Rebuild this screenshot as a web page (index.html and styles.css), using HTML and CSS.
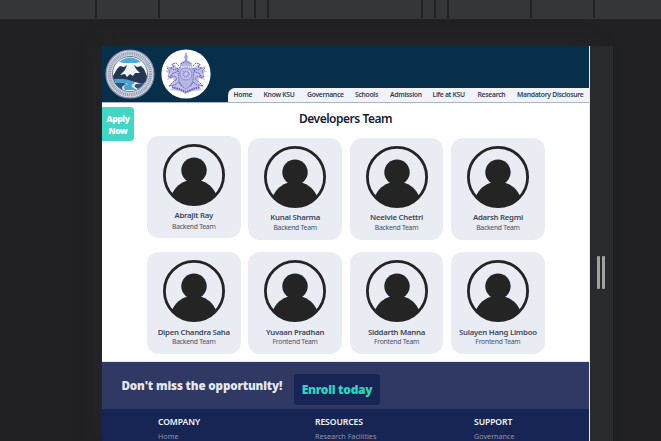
FILE: index.html
```html
<!DOCTYPE html>
<html lang="en">
<head>
<meta charset="utf-8">
<title>Developers Team</title>
<link rel="stylesheet" href="styles.css">
</head>
<body>
<svg class="defs" aria-hidden="true">
  <symbol id="avatar" viewBox="0 0 62 62">
    <circle cx="31" cy="31" r="29.6" fill="none" stroke="#242424" stroke-width="2.8"/>
    <circle cx="31" cy="26.3" r="12.7" fill="#242424"/>
    <path d="M8.5 51C12 43 18 38 25 36.5H37C44 38 50 43 53.5 51A30 30 0 0 1 8.5 51Z" fill="#242424"/>
  </symbol>
</svg>
<div class="ruler"><i></i><i></i><i></i><i></i><i></i><i></i><i></i><i></i><i></i><i></i></div>
<div class="device">
<main class="page">
  <header class="header">
    <div class="logos">
      <svg class="logo" viewBox="0 0 50 50">
        <circle cx="25" cy="25" r="24" fill="#d3d8e4" stroke="#8790aa" stroke-width="1.2"/>
        <circle cx="25" cy="25" r="20.6" fill="none" stroke="#959db2" stroke-width="3.4" stroke-dasharray="1.1 .8"/>
        <circle cx="25" cy="25" r="17.6" fill="#f7fafc" stroke="#68748c" stroke-width=".9"/>
        <path d="M14 13Q25 4 36 13L31 14H19Z" fill="#4cabd9"/>
        <path d="M8 27L12 20L15 17L19 18L22 16L29 16L32 18L36 17L39 20L42 27Q42 32 38 35Q30 33 25 32Q16 32 10 34Q8 30 8 27Z" fill="#243752"/>
        <path d="M22 16H29L31 20L35 24L30 24L28 27L25 25L22 28L20 25L15 26L20 21Z" fill="#edf3ed"/>
        <path d="M9 30Q20 29 27 32Q32 34 28 35Q24 37 32 41L20 41Q16 37 23 35Q20 33 10 34Z" fill="#4ba2d0"/>
        <path d="M10 34Q18 33 22 35Q15 37 18 41Q12 38 10 34M31 35Q27 37 33 40Q38 37 39 34Z" fill="#2d5577"/>
      </svg>
      <svg class="logo" viewBox="0 0 50 50">
        <circle cx="25" cy="25" r="24.6" fill="#fff"/>
        <g fill="#b7b4e4">
          <path d="M25 4L23 8L24 11L19 14V17H31V14L26 11L27 8ZM18 19H32V31Q31 38 25 40Q19 38 18 31Z"/>
          <path d="M17 20L14 16L10 15L12 19L5 17L7 21L4 22L9 25L6 31L12 29L13 33L7 38L13 37L9 41L18 42L25 45L32 42L41 41L37 37L43 38L37 33L38 29L44 31L41 25L46 22L43 21L45 17L38 19L40 15L36 16L33 20Z" opacity=".85"/>
        </g>
        <g fill="none" stroke="#605bb8" stroke-width=".9">
          <path d="M25 4V13M20 15Q25 11 30 15M19 18H31L33 21L32 32Q30 37 25 40Q20 37 18 32L17 21Z" stroke-dasharray="1.4 .8"/>
          <path d="M18 17L15 14L11 15L13 18L9 19L13 21L17 19L16 23L12 24L9 29L14 27L16 30L12 33L8 37L14 36L18 33L21 38M32 17L35 14L39 15L37 18L41 19L37 21L33 19L34 23L38 24L41 29L36 27L34 30L38 33L42 37L36 36L32 33L29 38" stroke-dasharray="2 .7"/>
          <path d="M6 19L9 22L7 28L12 26M44 19L41 22L43 28L38 26" stroke-dasharray="1.5 .7"/>
          <path d="M11 38L18 40L25 43L32 40L39 38" stroke-width="1.8" stroke-dasharray="1.5 .8"/>
        </g>
        <circle cx="25" cy="25" r="6" fill="#c9c6ea" stroke="#8c88cf"/>
        <circle cx="25" cy="25" r="2.8" fill="none" stroke="#8581cc" stroke-width="2" stroke-dasharray="1 .7"/>
      </svg>
    </div>
    <nav class="nav"><a>Home</a><a>Know KSU</a><a>Governance</a><a>Schools</a><a>Admission</a><a>Life at KSU</a><a>Research</a><a>Mandatory Disclosure</a></nav>
  </header>
  <section class="team">
    <a class="apply">Apply<br>Now</a>
    <h1>Developers Team</h1>
    <div class="cards">
      <article class="card first"><svg><use href="#avatar"/></svg><h2>Abrajit Ray</h2><p>Backend Team</p></article>
      <article class="card"><svg><use href="#avatar"/></svg><h2>Kunal Sharma</h2><p>Backend Team</p></article>
      <article class="card"><svg><use href="#avatar"/></svg><h2>Neelvie Chettri</h2><p>Backend Team</p></article>
      <article class="card"><svg><use href="#avatar"/></svg><h2>Adarsh Regmi</h2><p>Backend Team</p></article>
      <article class="card low"><svg><use href="#avatar"/></svg><h2>Dipen Chandra Saha</h2><p>Backend Team</p></article>
      <article class="card low"><svg><use href="#avatar"/></svg><h2>Yuvaan Pradhan</h2><p>Frontend Team</p></article>
      <article class="card low"><svg><use href="#avatar"/></svg><h2>Siddarth Manna</h2><p>Frontend Team</p></article>
      <article class="card low"><svg><use href="#avatar"/></svg><h2>Sulayen Hang Limboo</h2><p>Frontend Team</p></article>
    </div>
  </section>
  <section class="banner"><strong>Don't miss the opportunity!</strong><a class="enroll">Enroll today</a></section>
  <footer class="footer">
    <div><h3>COMPANY</h3><a>Home</a></div>
    <div><h3>RESOURCES</h3><a>Research Facilities</a></div>
    <div><h3>SUPPORT</h3><a>Governance</a></div>
  </footer>
</main>
<div class="resizer"><i></i><i></i></div>
</div>
</body>
</html>
```

FILE: styles.css
```css
* { box-sizing: border-box; }
body { margin: 0; width: 661px; height: 441px; overflow: hidden; background: #212123; font-family: "Noto Sans", "Open Sans", sans-serif; }
h1, h2, h3, p { margin: 0; }
a, h1, h2, h3, p, strong { white-space: nowrap; }
.defs { display: none; }
.ruler { height: 19px; display: grid; grid-template-columns: 63px 83px 13px 13px 154px 13px 13px 83px 63px 2px; padding-left: 95px; background: #35363a; }
.ruler i { width: 2px; height: 18px; background: #202124; }
.device { display: flex; height: 395px; margin: 27px 0 0 102px; }
.page { width: 488px; height: 395px; overflow: hidden; background: #fff; border-right: 1px solid #e5e8ef; box-shadow: 0 0 20px #29292b; }
.header { height: 57px; background: #082f49; border-bottom: 1px solid #a9b6c5; display: flex; justify-content: space-between; align-items: flex-end; }
.logos { display: flex; gap: 6px; padding-left: 3.4px; align-self: flex-start; padding-top: 3px; }
.logo { width: 50px; height: 50px; }
.nav { height: 14px; width: 361px; padding-left: 5.5px; border-radius: 7px 0 0 0; background: #f1f3f9; display: grid; grid-template-columns: 30px 43.5px 48px 35px 42.5px 45px 39.5px 67px; font-size: 6.8px; line-height: 14px; font-weight: 600; letter-spacing: -.3px; color: #334155; }
.team { height: 259px; display: flow-root; position: relative; border-bottom: 1px solid #e5e7eb; }
.apply { position: absolute; left: 0; top: 4px; width: 32px; height: 34px; padding-top: 6px; border-radius: 0 4px 4px 0; background: #42d6c5; color: #fff; font-size: 8.5px; line-height: 12px; font-weight: 900; letter-spacing: -.4px; text-align: center; }
h1 { margin-top: 8px; text-align: center; font-size: 12px; line-height: 16px; font-weight: 600; letter-spacing: -.48px; color: #172036; }
.cards { display: grid; grid-template-columns: repeat(4, 93.5px); column-gap: 7.9px; row-gap: 12px; margin: 11px 0 0 45px; }
.card { height: 102px; border-radius: 12px; background: #e9ecf2; padding-top: 8px; text-align: center; }
.card svg { display: block; width: 62px; height: 62px; margin: 0 auto; }
.card h2 { margin-top: 4px; font-size: 7.8px; line-height: 11px; font-weight: 600; letter-spacing: -.26px; color: #414760; }
.card p { font-size: 6.8px; line-height: 10px; letter-spacing: -.24px; color: #475069; }
.first { margin-top: -2px; margin-bottom: 2px; }
.first p { margin-top: 1px; }
.low h2 { margin-top: 5px; }
.low p { margin-top: -1px; }
.banner { height: 47px; display: flex; align-items: flex-start; gap: 12px; padding: 12px 0 0 19.5px; background: #303864; color: #e5e7f2; }
.banner strong { width: 160.5px; margin-top: 3px; font-size: 11.6px; line-height: 17px; font-weight: 900; letter-spacing: -.14px; }
.enroll { width: 86px; height: 31px; border-radius: 3px; background: #172554; color: #2dd4bf; font-size: 12px; line-height: 32px; font-weight: 900; letter-spacing: -.3px; text-align: center; }
.footer { height: 40px; padding: 7px 0 0 56px; display: grid; grid-template-columns: 157px 159px 80px; background: #172554; }
.footer h3 { font-size: 8.6px; line-height: 12px; font-weight: 600; letter-spacing: -.1px; color: #f3f5fa; }
.footer a { display: block; margin-top: 2px; font-size: 7.2px; line-height: 12px; color: #8c94ae; }
.resizer { width: 23px; height: 395px; display: flex; gap: 2px; padding-left: 7px; align-items: flex-start; padding-top: 210px; background: #292a2d; }
.resizer i { width: 3px; height: 33px; background: #a1a1a1; border-radius: 1px; }
```
